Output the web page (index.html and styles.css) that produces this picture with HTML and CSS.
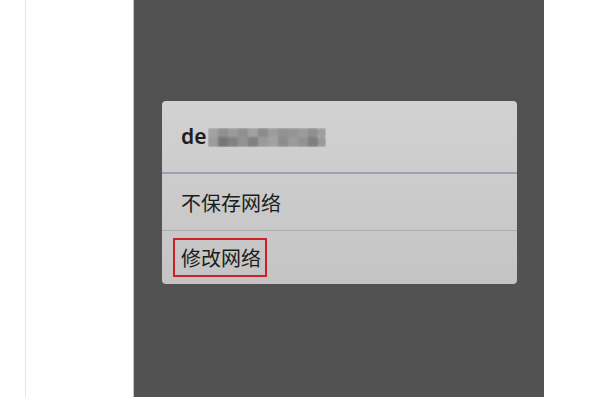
FILE: index.html
```html
<!DOCTYPE html>
<html lang="zh-CN">
<head>
  <meta charset="UTF-8">
  <title>修改网络</title>
  <link rel="stylesheet" href="styles.css">
</head>
<body>

<div class="page">
  <div class="rail"></div>

  <div class="screen">
    <div class="dialog">
      <div class="dialog-title">
        <span class="ssid">de</span>
        <svg class="mosaic" width="118" height="19" viewBox="0 0 118 19">
          <defs>
            <filter id="soft"><feGaussianBlur stdDeviation="0.8"/></filter>
          </defs>
          <g filter="url(#soft)">
            <rect x="0" y="0" width="10" height="9" fill="#a2a2a2"/>
            <rect x="10" y="0" width="10" height="9" fill="#909090"/>
            <rect x="20" y="0" width="10" height="9" fill="#9b9b9b"/>
            <rect x="30" y="0" width="10" height="9" fill="#8f8f8f"/>
            <rect x="40" y="0" width="10" height="9" fill="#a2a2a2"/>
            <rect x="50" y="0" width="10" height="9" fill="#8b8b8b"/>
            <rect x="60" y="0" width="10" height="9" fill="#9d9d9d"/>
            <rect x="70" y="0" width="10" height="9" fill="#919191"/>
            <rect x="80" y="0" width="10" height="9" fill="#949494"/>
            <rect x="90" y="0" width="10" height="9" fill="#9c9c9c"/>
            <rect x="100" y="0" width="10" height="9" fill="#8f8f8f"/>
            <rect x="110" y="0" width="8" height="9" rx="3" fill="#9e9e9e"/>
            <rect x="0" y="9" width="10" height="10" fill="#9c9c9c"/>
            <rect x="10" y="9" width="10" height="10" fill="#777777"/>
            <rect x="20" y="9" width="10" height="10" fill="#838383"/>
            <rect x="30" y="9" width="10" height="10" fill="#939393"/>
            <rect x="40" y="9" width="10" height="10" fill="#808080"/>
            <rect x="50" y="9" width="10" height="10" fill="#9a9a9a"/>
            <rect x="60" y="9" width="10" height="10" fill="#a2a2a2"/>
            <rect x="70" y="9" width="10" height="10" fill="#8d8d8d"/>
            <rect x="80" y="9" width="10" height="10" fill="#9b9b9b"/>
            <rect x="90" y="9" width="10" height="10" fill="#929292"/>
            <rect x="100" y="9" width="10" height="10" fill="#7f7f7f"/>
            <rect x="110" y="9" width="8" height="10" rx="3" fill="#999999"/>
          </g>
        </svg>
      </div>
      <div class="dialog-row">不保存网络</div>
      <div class="dialog-row last">
        <span class="marked">修改网络</span>
      </div>
    </div>
  </div>
</div>

</body>
</html>
```

FILE: styles.css
```css
body {
  margin: 0;
  background: #fff;
  font-family: "Noto Sans", "Noto Sans CJK SC", sans-serif;
}

.page {
  display: flex;
  height: 397px;
  overflow: hidden;
}

.rail {
  width: 107px;
  margin-left: 25px;
  border-left: 1px solid #dde7f1;
}

.screen {
  width: 411px;
  height: 397px;
  background: #525252;
  border-left: 1px solid #c4c4c4;
  padding: 101px 0 0 28px;
  box-sizing: border-box;
}

.dialog {
  width: 355px;
  border-radius: 4px;
  overflow: hidden;
  background: linear-gradient(#d2d2d2, #c4c4c4);
}

.dialog-title {
  height: 73px;
  display: flex;
  align-items: center;
  padding-left: 19px;
  border-bottom: 2px solid #9d9fb3;
  box-sizing: border-box;
}

.ssid {
  font-size: 21px;
  font-weight: 600;
  color: #1e1e1e;
  margin-right: 2px;
  padding-bottom: 2px;
}

.mosaic {
  margin-top: 2px;
}

.dialog-row {
  height: 56px;
  display: flex;
  align-items: center;
  padding-left: 19px;
  font-size: 20px;
  color: #1c1c1c;
  border-bottom: 1px solid #adadad;
  font-family: "Noto Sans CJK SC", sans-serif;
}

.dialog-row.last {
  height: 53px;
  border-bottom: none;
  padding-left: 11px;
}

.marked {
  border: 2px solid #cf1d2a;
  padding: 6px 4px 5px 6px;
  line-height: 24px;
}
```
